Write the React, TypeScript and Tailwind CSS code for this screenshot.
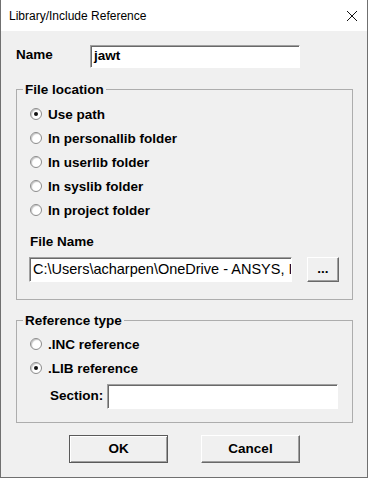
import React from "react";

const sunken =
  "bg-white border-t border-l border-[#a0a0a0] border-b border-r border-b-white border-r-white shadow-[inset_1px_1px_0_#696969]";

const raised =
  "bg-[#f0f0f0] border-t border-l border-white border-b border-r border-b-[#696969] border-r-[#696969] shadow-[inset_-1px_-1px_0_#a0a0a0]";

function Radio({ label, checked }: { label: string; checked?: boolean }) {
  return (
    <div className="flex items-center h-[24px] ml-[1px]">
      <span className="w-[12px] h-[12px] rounded-full border border-[#8c8c8c] bg-white shadow-[inset_1px_1px_1px_#c4c4c4] flex items-center justify-center">
        {checked && <span className="w-[4px] h-[4px] rounded-full bg-[#111]" />}
      </span>
      <span className="ml-[6px] font-bold leading-[15px]">{label}</span>
    </div>
  );
}

function Group({ title, children }: { title: string; children: React.ReactNode }) {
  return (
    <fieldset className="ml-[15px] w-[337px] border border-[#adadad] p-0 m-0">
      <legend className="ml-[6px] px-[2px] font-bold leading-[15px]">{title}</legend>
      {children}
    </fieldset>
  );
}

export default function App() {
  return (
    <div
      className="w-[368px] h-[478px] border-x border-b border-[#707070] bg-[#f0f0f0] flex flex-col text-[13.5px] text-black"
      style={{ fontFamily: '"Liberation Sans", Arial, sans-serif' }}
    >
      <div className="h-[31px] bg-white flex items-center justify-between pl-[8px] pr-[9px] shrink-0">
        <span className="text-[12px]">Library/Include Reference</span>
        <svg width="12" height="12" viewBox="0 0 12 12">
          <path d="M1 1 L11 11 M11 1 L1 11" stroke="#111" strokeWidth="1" />
        </svg>
      </div>

      <div className="mt-[14px] flex items-start">
        <span className="ml-[15px] w-[74px] font-bold leading-[15px] mt-[2px]">Name</span>
        <div className={`w-[210px] h-[23px] flex items-center pl-[3px] font-bold ${sunken}`}>jawt</div>
      </div>

      <div className="mt-[14px]">
        <Group title="File location">
          <div className="pl-[12px] pr-[12px] pt-[5px] pb-[17px]">
            <Radio label="Use path" checked />
            <Radio label="In personallib folder" />
            <Radio label="In userlib folder" />
            <Radio label="In syslib folder" />
            <Radio label="In project folder" />
            <div className="mt-[12px] font-bold leading-[15px] ml-[1px]">File Name</div>
            <div className="mt-[8px] flex items-center">
              <div className={`w-[263px] h-[25px] flex items-center pl-[3px] overflow-hidden whitespace-nowrap text-[14.5px] ${sunken}`}>
                {"C:\\Users\\acharpen\\OneDrive - ANSYS, In"}
              </div>
              <button className={`ml-[15px] w-[32px] h-[25px] font-bold leading-none pb-[1px] ${raised}`}>...</button>
            </div>
          </div>
        </Group>
      </div>

      <div className="mt-[13px]">
        <Group title="Reference type">
          <div className="pl-[12px] pr-[12px] pt-[4px] pb-[13px]">
            <Radio label=".INC reference" />
            <Radio label=".LIB reference" checked />
            <div className="mt-[4px] flex items-center">
              <span className="ml-[21px] w-[57px] font-bold">Section:</span>
              <div className={`w-[231px] h-[25px] ${sunken}`} />
            </div>
          </div>
        </Group>
      </div>

      <div className="mt-[12px] flex justify-center gap-[33px] pl-[1px]">
        <button className="w-[99px] h-[28px] border border-[#5a5a5a] bg-[#f0f0f0] shadow-[inset_1px_1px_0_#fff,inset_-1px_-1px_0_#a0a0a0] font-bold">
          OK
        </button>
        <button className={`w-[99px] h-[28px] font-bold ${raised}`}>Cancel</button>
      </div>
    </div>
  );
}
